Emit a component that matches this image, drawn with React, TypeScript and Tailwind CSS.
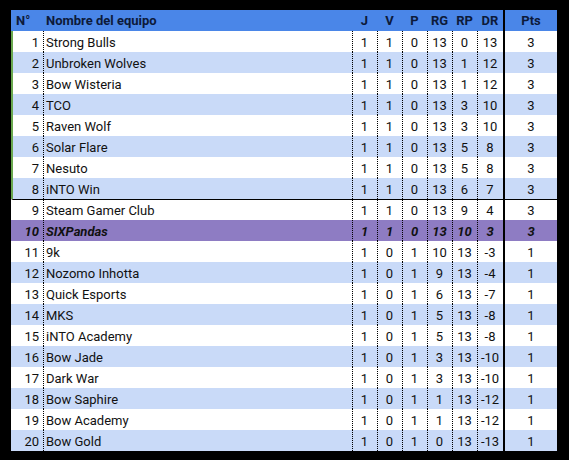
type Row = [number, string, number, number, number, number, number, number, number];

const rows: Row[] = [
  [1, "Strong Bulls", 1, 1, 0, 13, 0, 13, 3],
  [2, "Unbroken Wolves", 1, 1, 0, 13, 1, 12, 3],
  [3, "Bow Wisteria", 1, 1, 0, 13, 1, 12, 3],
  [4, "TCO", 1, 1, 0, 13, 3, 10, 3],
  [5, "Raven Wolf", 1, 1, 0, 13, 3, 10, 3],
  [6, "Solar Flare", 1, 1, 0, 13, 5, 8, 3],
  [7, "Nesuto", 1, 1, 0, 13, 5, 8, 3],
  [8, "iNTO Win", 1, 1, 0, 13, 6, 7, 3],
  [9, "Steam Gamer Club", 1, 1, 0, 13, 9, 4, 3],
  [10, "SIXPandas", 1, 1, 0, 13, 10, 3, 3],
  [11, "9k", 1, 0, 1, 10, 13, -3, 1],
  [12, "Nozomo Inhotta", 1, 0, 1, 9, 13, -4, 1],
  [13, "Quick Esports", 1, 0, 1, 6, 13, -7, 1],
  [14, "MKS", 1, 0, 1, 5, 13, -8, 1],
  [15, "iNTO Academy", 1, 0, 1, 5, 13, -8, 1],
  [16, "Bow Jade", 1, 0, 1, 3, 13, -10, 1],
  [17, "Dark War", 1, 0, 1, 3, 13, -10, 1],
  [18, "Bow Saphire", 1, 0, 1, 1, 13, -12, 1],
  [19, "Bow Academy", 1, 0, 1, 1, 13, -12, 1],
  [20, "Bow Gold", 1, 0, 1, 0, 13, -13, 1],
];

// columns: N° | name | J V P RG RP | DR | solid rule | Pts
const grid = "grid grid-cols-[30px_309px_25px_25px_25px_25px_25px_26px_2px_52px] h-[21px] items-stretch";

// dotted rule on the left edge of a cell (Sheets-style dotted border)
const dotted =
  "bg-[image:repeating-linear-gradient(to_bottom,#000_0_1px,transparent_1px_2px)] bg-no-repeat bg-[length:1px_100%] bg-left";

function StatCell({ value }: { value: number }) {
  return <div className={`flex items-center justify-center pt-px ${dotted}`}>{value}</div>;
}

function TableRow({ row }: { row: Row }) {
  const [pos, name, ...stats] = row;
  const pts = stats.pop() as number;
  const top = pos <= 8;
  const mine = pos === 10;
  const bg = mine ? "bg-[#8e7cc3]" : pos % 2 === 0 ? "bg-[#c9daf8]" : "bg-white";

  return (
    <div
      className={`${grid} ${bg} border-l-2 ${top ? "border-l-[#6aa84f]" : "border-l-transparent"} ${
        pos === 9 ? "border-t border-t-black" : ""
      } ${mine ? "font-bold italic" : ""}`}
    >
      <div className="flex items-center justify-end pr-[4px] pt-px">{pos}</div>
      <div className={`flex items-center pl-[3px] pt-px ${dotted}`}>{name}</div>
      {stats.map((s, i) => (
        <StatCell key={i} value={s} />
      ))}
      <div className="bg-black" />
      <div className="flex items-center justify-center pt-px">{pts}</div>
    </div>
  );
}

export default function App() {
  return (
    <div
      className="w-[569px] h-[460px] bg-black pt-[10px] pl-[11px] text-[13px] leading-none text-[#111]"
      style={{ fontFamily: "Roboto, 'Liberation Sans', sans-serif" }}
    >
      <div className="w-[546px]">
        {/* Header */}
        <div className={`${grid} bg-[#4a86e8] border-l-2 border-l-transparent font-bold text-[#0d1a3a]`}>
          <div className="flex items-center pl-[3px]">N°</div>
          <div className="flex items-center pl-[3px]">Nombre del equipo</div>
          {["J", "V", "P", "RG", "RP", "DR"].map((h) => (
            <div key={h} className="flex items-center justify-center">
              {h}
            </div>
          ))}
          <div className="bg-black" />
          <div className="flex items-center justify-center">Pts</div>
        </div>

        {rows.map((r) => (
          <TableRow key={r[0]} row={r} />
        ))}
      </div>
    </div>
  );
}
